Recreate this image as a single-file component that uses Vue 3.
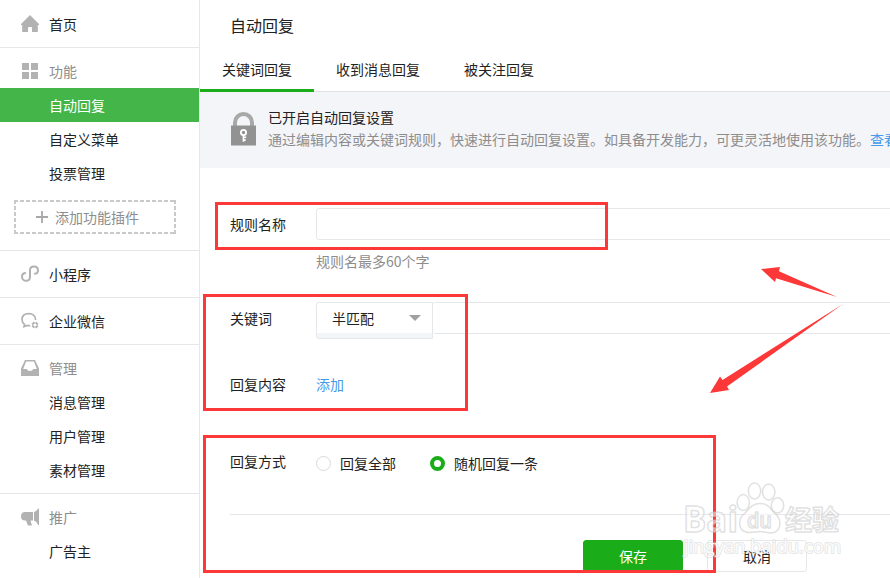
<script setup>
const tabs = ['关键词回复', '收到消息回复', '被关注回复']
const featureItems = ['自动回复', '自定义菜单', '投票管理']
const manageItems = ['消息管理', '用户管理', '素材管理']
</script>

<template>
  <div class="page">
    <aside class="sidebar">
      <section class="group">
        <div class="head dark">
          <svg class="icon" viewBox="0 0 18 18"><path d="M9 0L0 9V10H1.2V17H7V13Q7 12 8 12H10Q11 12 11 13V17H16.8V10H18V9Z" /></svg>
          <span>首页</span>
        </div>
      </section>
      <section class="group features">
        <div class="head">
          <svg class="icon" viewBox="0 0 18 18"><path d="M1 1h7v7H1zM10 1h7v7h-7zM1 10h7v7H1zM10 10h7v7h-7z" /></svg>
          <span>功能</span>
        </div>
        <a v-for="(item, i) in featureItems" :key="item" class="item" :class="{ active: i === 0 }">{{ item }}</a>
        <a class="plugin">
          <svg class="plus" viewBox="0 0 12 12"><path d="M5.1 0h1.8v5.1H12v1.8H6.9V12H5.1V6.9H0V5.1h5.1z" /></svg>
          <span>添加功能插件</span>
        </a>
      </section>
      <section class="group">
        <div class="head dark">
          <svg class="icon line" viewBox="0 0 18 18"><path d="M4.9 8.1C2.5 8.1 1 9.5 1 11.7C1 13.8 2.8 15.8 5 15.8C7.4 15.8 9 14.2 9 12V5.2C9 3 10.7 1.5 13 1.5C15.3 1.5 17 3 17 5.2C17 7.4 15.5 8.8 13.1 8.8" stroke-width="2" /></svg>
          <span>小程序</span>
        </div>
      </section>
      <section class="group">
        <div class="head dark">
          <svg class="icon line" viewBox="0 0 18 18">
            <path d="M14.6 8C14.6 4 12 1.6 7.8 1.6C3.6 1.6 1 4 1 7.6C1 9.8 2 11.4 3.5 12.4L3 14.6L5.4 13.6H9.2" stroke-width="1.7" />
            <path d="M14 9.8L17.4 13L14 16.2L10.6 13Z" stroke-width="1.9" stroke-dasharray="3.2 1.47" stroke-dashoffset="-0.8" />
          </svg>
          <span>企业微信</span>
        </div>
      </section>
      <section class="group manage">
        <div class="head">
          <svg class="icon" viewBox="0 0 18 18"><path fill-rule="evenodd" d="M4 1H14L18 9.5V17H0V9.5ZM5.1 2.5L2.2 10H5.8Q6.3 12 9 12Q11.7 12 12.2 10H15.8L12.9 2.5Z" /></svg>
          <span>管理</span>
        </div>
        <a v-for="item in manageItems" :key="item" class="item">{{ item }}</a>
      </section>
      <section class="group last">
        <div class="head">
          <svg class="icon" viewBox="0 0 18 18"><path d="M12 4H4Q0 4 0 8.6Q0 12.4 4 12.6H5L6.5 16.5Q6.8 17.5 8 17.5H11L9.8 14V12.6H12ZM13 4Q15.5 3.5 17.2.6H18V17H17.2Q15.5 13.3 13 12.6Z" /></svg>
          <span>推广</span>
        </div>
        <a class="item">广告主</a>
      </section>
    </aside>

    <main class="main">
      <h1 class="title">自动回复</h1>
      <nav class="tabs">
        <a v-for="(tab, i) in tabs" :key="tab" class="tab" :class="{ current: i === 0 }">{{ tab }}</a>
      </nav>
      <div class="banner">
        <svg class="lock" viewBox="0 0 25 34">
          <path d="M4 14V10.5A8.5 8.5 0 0 1 21 10.5V14" fill="none" stroke="#a8a8a8" stroke-width="4" />
          <path d="M0 13.5H25V33.5H0Z" fill="#929292" />
          <circle cx="12.5" cy="20.5" r="2.6" fill="none" stroke="#fff" stroke-width="1.8" />
          <path d="M11.6 23h1.8v1.4h1.8V26h-1.8v1.2h1.4v1.5h-1.4v1h-1.8z" fill="#fff" />
        </svg>
        <div class="copy">
          <p class="strong">已开启自动回复设置</p>
          <p class="desc">通过编辑内容或关键词规则，快速进行自动回复设置。如具备开发能力，可更灵活地使用该功能。<a class="link">查看</a></p>
        </div>
      </div>
      <div class="form">
        <div class="row">
          <label class="label">规则名称</label>
          <div class="field">
            <div class="input"></div>
            <p class="hint">规则名最多60个字</p>
          </div>
        </div>
        <div class="row keyword">
          <label class="label">关键词</label>
          <div class="field combo">
            <div class="select"><span>半匹配</span><i class="caret"></i></div>
            <div class="input joined"></div>
          </div>
        </div>
        <div class="row content">
          <label class="label">回复内容</label>
          <a class="link add">添加</a>
        </div>
        <div class="row method">
          <label class="label">回复方式</label>
          <div class="radios">
            <span class="option"><i class="radio"></i><span>回复全部</span></span>
            <span class="option"><i class="radio checked"></i><span>随机回复一条</span></span>
          </div>
        </div>
        <div class="actions">
          <button class="btn primary">保存</button>
          <button class="btn">取消</button>
        </div>
      </div>
    </main>

    <div class="mark name"></div>
    <div class="mark match"></div>
    <div class="mark submit"></div>
    <svg class="overlay" viewBox="0 0 890 578">
      <g fill="#fd3838">
        <path d="M761 269L780 267L779 271.3L837 297L776 278.3L775 282Z" />
        <path d="M710 393L720 376.5L722.5 380L843 304L727 386.5L729 390Z" />
      </g>
      <g class="watermark">
        <text class="latin" x="683" y="532" textLength="55" lengthAdjust="spacingAndGlyphs">Bai</text>
        <ellipse cx="743.3" cy="502.5" rx="6.2" ry="8" />
        <ellipse cx="754.5" cy="491" rx="6.2" ry="8" />
        <ellipse cx="768.7" cy="492" rx="6.2" ry="8" />
        <ellipse cx="777.5" cy="505.3" rx="6.2" ry="7.6" />
        <path d="M760 503.5C751 503.5 749 510 744 514C738 519 738 530 746 532C751 533.5 755 531.5 760 531.5C765 531.5 769 534 774 532.5C782 530 781 519 776 514.5C770 509 769 503.5 760 503.5Z" />
        <text class="du" x="747" y="528" textLength="25" lengthAdjust="spacingAndGlyphs">du</text>
        <text class="han" x="785" y="530" textLength="54" lengthAdjust="spacingAndGlyphs">经验</text>
        <text class="url" x="684" y="553" textLength="157" lengthAdjust="spacingAndGlyphs">jingyan.baidu.com</text>
      </g>
    </svg>
  </div>
</template>

<style>
body { overflow: hidden; background: #fff; }
</style>

<style scoped>
.page {
  position: relative;
  display: flex;
  width: 890px;
  height: 578px;
  overflow: hidden;
  font: 14px/20px "Noto Sans CJK SC", sans-serif;
  color: #222;
}
.page * { box-sizing: border-box; }
p, h1 { margin: 0; font-weight: 400; }

.sidebar { flex: none; width: 200px; border-right: 1px solid #e7e7eb; }
.group { border-bottom: 1px solid #e7e7eb; }
.group.last { border-bottom: 0; }
.head { display: flex; align-items: center; height: 46px; padding-left: 21px; color: #8d8d8d; }
.group:first-child .head { height: 47px; }
.group:first-child .icon { margin-top: 0; }
.head.dark { color: #222; }
.icon { flex: none; width: 18px; height: 18px; margin-right: 10px; margin-top: -1px; fill: #b2b2b2; }
.icon.line { fill: none; stroke: #b2b2b2; }
.item { display: flex; align-items: center; height: 34px; padding: 0 0 1px 49px; }
.item.active { color: #fff; background: #44b549; }
.features { height: 203px; }
.features .head { height: 40px; padding-top: 6px; }
.manage { height: 149px; }
.manage .head { height: 40px; padding-top: 6px; }
.last .head { height: 40px; padding-top: 6px; }
.plugin {
  display: flex;
  align-items: center;
  width: 162px;
  height: 34px;
  margin: 10px 0 0 14px;
  padding-left: 22px;
  color: #8d8d8d;
  background:
    repeating-linear-gradient(90deg, #c9c9c9 0 4px, transparent 4px 6px) 0 0 / 100% 2px no-repeat,
    repeating-linear-gradient(90deg, #c9c9c9 0 4px, transparent 4px 6px) 0 100% / 100% 2px no-repeat,
    repeating-linear-gradient(#c9c9c9 0 4px, transparent 4px 6px) 0 0 / 2px 100% no-repeat,
    repeating-linear-gradient(#c9c9c9 0 4px, transparent 4px 6px) 100% 0 / 2px 100% no-repeat;
}
.plus { width: 12px; height: 12px; margin-right: 7px; fill: #a8a8a8; }

.main { flex: none; width: 690px; overflow: hidden; }
.title { height: 52px; padding-left: 30px; font-size: 16px; line-height: 51px; }
.tabs { display: flex; height: 40px; border-bottom: 1px solid #e0e1e5; }
.tab { height: 40px; padding: 0 22px; line-height: 34px; }
.tab.current { border-bottom: 3px solid #1aad19; }
.banner { display: flex; height: 76px; padding: 14px 0 0 31px; background: #f4f5f9; white-space: nowrap; }
.lock { flex: none; width: 25px; height: 34px; margin: 6px 12px 0 0; }
.copy { line-height: 22px; }
.desc { color: #8d8d8d; }
.link { color: #459ae9; }

.form { padding: 40px 0 0 30px; }
.row { display: flex; width: 760px; }
.label { flex: none; width: 86px; line-height: 33px; }
.field { flex: none; width: 700px; }
.input { height: 32px; border: 1px solid #e4e8eb; border-radius: 3px; }
.hint { margin: 11px 0 1px; color: #8d8d8d; }
.keyword { height: 37px; margin-top: 30px; }
.combo { display: flex; align-items: flex-start; }
.select {
  display: flex;
  align-items: center;
  justify-content: space-between;
  width: 117px;
  height: 37px;
  padding: 0 11px 5px 15px;
  border: 1px solid #e4e8eb;
  border-radius: 3px 0 0 3px;
  background: linear-gradient(#fff 30px, #f4f5f9 30px);
}
.caret { border: 6px solid transparent; border-top-color: #a0a0a0; border-bottom: 0; }
.joined { flex: 1; border-left: 0; }
.content { margin-top: 29px; }
.add { line-height: 33px; }
.method { height: 70px; margin-top: 44px; border-bottom: 1px solid #e7e7eb; }
.radios { display: flex; gap: 34px; padding-top: 8px; }
.option { display: flex; align-items: center; height: 20px; }
.radio { width: 15px; height: 15px; margin-right: 9px; border: 1px solid #d9dadc; border-radius: 50%; }
.radio.checked { border: 4px solid #1aad19; }
.actions { display: flex; gap: 24px; padding: 25px 0 0 353px; }
.btn { width: 100px; height: 32px; padding: 0 0 1px; border: 1px solid #e4e8eb; border-radius: 3px; background: #fff; color: #222; font: inherit; }
.primary { border-color: #1aad19; background: #1aad19; color: #fff; }

.mark { position: absolute; border: 3px solid #fd3838; }
.name { left: 215px; top: 202px; width: 393px; height: 48px; }
.match { left: 203px; top: 294px; width: 265px; height: 117px; }
.submit { left: 203px; top: 435px; width: 513px; height: 138px; }
.overlay { position: absolute; left: 0; top: 0; width: 890px; height: 578px; pointer-events: none; }
.watermark { fill: #fff; fill-opacity: .5; stroke: rgb(195, 195, 195); stroke-opacity: .5; stroke-width: 1.5; stroke-linejoin: round; font-family: "Open Sans", sans-serif; }
.latin { font-size: 36px; font-weight: 700; }
.du { font-size: 21px; font-weight: 600; }
.han { font-family: "Noto Sans CJK SC", sans-serif; font-size: 27px; font-weight: 700; }
.url { font-size: 19px; stroke-width: 2; stroke-opacity: .4; fill-opacity: .85; paint-order: stroke; }
</style>
